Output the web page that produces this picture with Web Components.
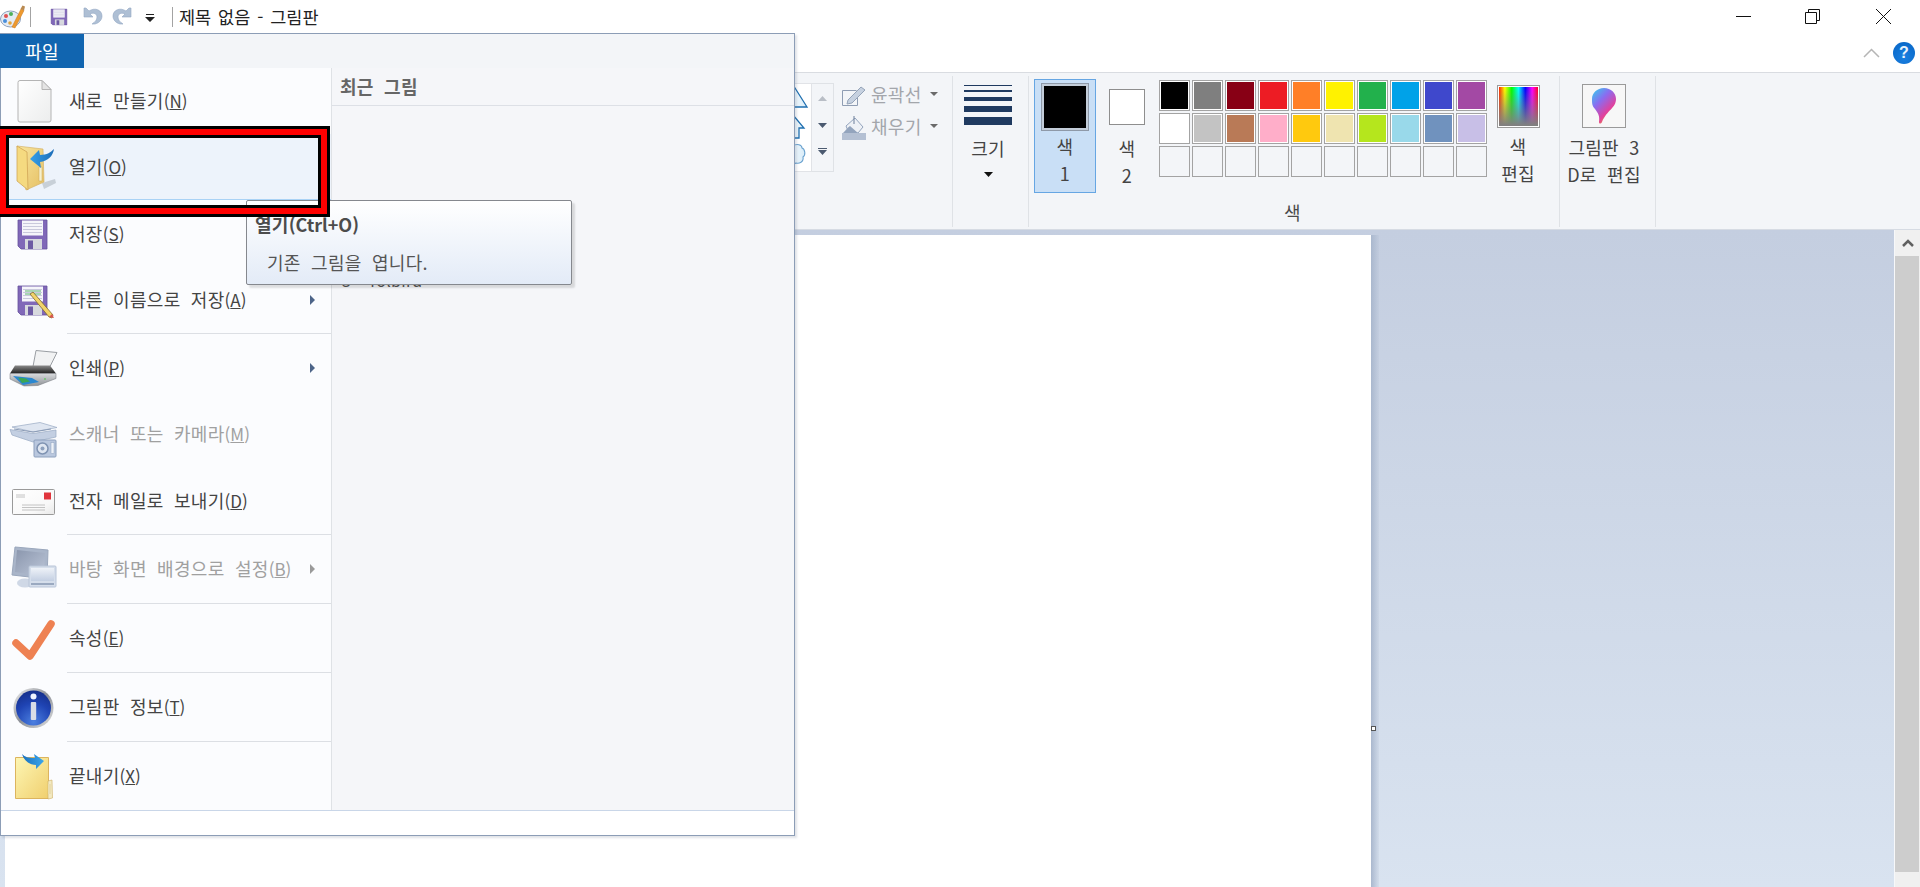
<!DOCTYPE html>
<html lang="ko">
<head>
<meta charset="utf-8">
<title>제목 없음 - 그림판</title>
<style>
  html, body { margin: 0; height: 100%; overflow: hidden; background: #fff; }
  body { font: 18px "Noto Sans CJK KR", "Noto Sans", sans-serif; color: #444; }
</style>
</head>
<body>
<paint-app></paint-app>

<script>
const floppy = `
  <path d="M0 0h29v29H3l-3-3z" transform="translate(14 16)" fill="#8068b8" stroke="#65509c" stroke-width=".8"/>
  <rect x="18" y="16.500" width="21" height="15" fill="#f5f5fa"/>
  <path d="M19 19.500h19M19 22.500h19M19 25.500h19M19 28.500h19" stroke="#c9c9dc"/>
  <rect x="21" y="35" width="17" height="10" fill="#d7d9de"/>
  <rect x="24" y="36.500" width="5" height="8.500" fill="#6d5aa4"/>`

const icons = {
  new: `
    <defs><linearGradient id="g" x1="0" y1="0" x2="1" y2="1"><stop offset="0" stop-color="#fff"/><stop offset="1" stop-color="#eceded"/></linearGradient></defs>
    <path d="M16 9.500h22l9 9V49a2 2 0 0 1-2 2H16a2 2 0 0 1-2-2V11.500a2 2 0 0 1 2-2z" fill="url(#g)" stroke="#b4b4b4"/>
    <path d="M38 9.500v9h9z" fill="#e4e4e4" stroke="#b4b4b4"/>`,
  open: `
    <defs>
      <linearGradient id="g" x1="0" y1="0" x2="1" y2="1"><stop offset="0" stop-color="#f8e6a0"/><stop offset="1" stop-color="#e6c063"/></linearGradient>
      <linearGradient id="b" x1="0" y1="0" x2="1" y2="0"><stop offset="0" stop-color="#35a0ea"/><stop offset="1" stop-color="#1c6db8"/></linearGradient>
    </defs>
    <path d="M38 46l13-4 1 4-12 6z" fill="#aab2bc" opacity=".55"/>
    <path d="M13 9l26 3 1 33-18 8z" fill="url(#g)" stroke="#d6b36a" stroke-width=".7"/>
    <path d="M13 9l10 6 1 38-11-9z" fill="#f5da80" stroke="#d0a657" stroke-width=".8"/>
    <path d="M35 30h3v14h-3z" fill="#f6f0cc" stroke="#c9a75a" stroke-width=".5"/>
    <path d="M50 12c-1 7-6 12-14 13l1 6-11-9 9-9 1 5c7 0 11-3 14-6z" fill="url(#b)"/>`,
  save: floppy,
  saveas: `${floppy}
    <path d="M21 21h16M21 24h16" stroke="#5bb56c"/>
    <path d="M26 24l3-2 20 23-1 3-3-1z" fill="#f2d36a" stroke="#7d6a2d" stroke-width=".8"/>
    <path d="M45 47l3-3 2 4z" fill="#d9534f"/>`,
  print: `
    <defs><linearGradient id="d" x1="0" y1="0" x2="0" y2="1"><stop offset="0" stop-color="#8b8b8b"/><stop offset="1" stop-color="#1f1f1f"/></linearGradient>
    <linearGradient id="s" x1="0" y1="0" x2="0" y2="1"><stop offset="0" stop-color="#d9dbde"/><stop offset="1" stop-color="#8e9296"/></linearGradient></defs>
    <path d="M32 12.500l21 2-7 14H29z" fill="#f1f2f3" stroke="#9a9ea3"/>
    <path d="M11 27.500h35l6 8H6z" fill="url(#d)"/>
    <path d="M6 35.500h46v5l-18 7-14 .5-14-7z" fill="url(#s)" stroke="#70757a" stroke-width=".5"/>
    <path d="M9 38l19 2 7 4-16 3z" fill="#2a87d0"/>
    <path d="M14 39.500l8 1 4 3-8 1.500z" fill="#3aa655"/>
    <circle cx="41" cy="41" r="1" fill="#6fc46f"/>`,
  scan: `
    <path d="M8 23l28-4.500 17 5L29 28z" fill="#dfe6f1" stroke="#98a9c3" stroke-width=".7"/>
    <path d="M6 25.500l23 4 23-3.500v7l-23 5-21-7z" fill="#c3cfe2" stroke="#98a9c3" stroke-width=".7"/>
    <path d="M10 25l19 3 18-3" fill="none" stroke="#8a9bb6"/>
    <rect x="30" y="36" width="22" height="17" rx="1" fill="#b9c7de" stroke="#8da0bd"/>
    <circle cx="38.500" cy="44.500" r="5.500" fill="#dfe6f1" stroke="#7f93b2" stroke-width="1.500"/>
    <circle cx="38.500" cy="44.500" r="2" fill="#8da0bd"/>
    <rect x="47" y="38.500" width="3" height="11" fill="#eef2f8" stroke="#8da0bd" stroke-width=".5"/>`,
  mail: `
    <defs><linearGradient id="g" x1="0" y1="0" x2="1" y2="1"><stop offset="0" stop-color="#fff"/><stop offset=".7" stop-color="#f8f8f8"/><stop offset="1" stop-color="#e8e8e8"/></linearGradient></defs>
    <rect x="8.500" y="18.500" width="42" height="25" rx="1" fill="url(#g)" stroke="#9a9a9a"/>
    <rect x="40" y="21.500" width="7" height="7" fill="#e0343c"/>
    <path d="M12 24h9M12 26h9M18 34h23M18 36.500h23M18 39h23" stroke="#b5b5b5" stroke-width=".8"/>`,
  wall: `
    <defs><linearGradient id="g" x1="0" y1="0" x2="1" y2="1"><stop offset="0" stop-color="#8a96ad"/><stop offset="1" stop-color="#bcc6d8"/></linearGradient>
    <linearGradient id="f" x1="0" y1="0" x2="0" y2="1"><stop offset="0" stop-color="#eef2f8"/><stop offset="1" stop-color="#c3cfe2"/></linearGradient></defs>
    <path d="M11 8l33 3-1 29-35-4z" fill="#a9b5c9" stroke="#9aa7bc"/>
    <path d="M13 11l28 3-1 23-29-4z" fill="url(#g)"/>
    <ellipse cx="21" cy="44" rx="8" ry="4.500" fill="#cfd8e6"/>
    <rect x="25" y="27" width="27" height="21" rx="1" fill="#d5deeb" stroke="#b9c5d8"/>
    <rect x="27" y="29" width="23" height="13" fill="url(#f)"/>
    <rect x="27" y="44" width="23" height="2" fill="#9aa9c0"/>`,
  check: `
    <path d="M12 35l14 13 21-32" fill="none" stroke="#ee8152" stroke-width="7.500" stroke-linecap="round" stroke-linejoin="round"/>`,
  info: `
    <defs>
      <radialGradient id="b" cx=".5" cy=".9" r=".9"><stop offset="0" stop-color="#4b7fe0"/><stop offset=".6" stop-color="#1f44b4"/><stop offset="1" stop-color="#16308c"/></radialGradient>
      <linearGradient id="r" x1="0" y1="0" x2="1" y2="1"><stop offset="0" stop-color="#f3f3f3"/><stop offset=".5" stop-color="#8b8f96"/><stop offset="1" stop-color="#e5e5e5"/></linearGradient>
    </defs>
    <circle cx="29.500" cy="31" r="20" fill="url(#r)"/>
    <circle cx="29.500" cy="31" r="17.500" fill="url(#b)"/>
    <circle cx="29.500" cy="19.500" r="3" fill="#eef3ff"/>
    <rect x="26.800" y="25" width="5.400" height="18" rx="1" fill="#d9dde6"/>`,
  exit: `
    <defs>
      <linearGradient id="g" x1="0" y1="0" x2="1" y2="1"><stop offset="0" stop-color="#fdf6b4"/><stop offset="1" stop-color="#f0cf6e"/></linearGradient>
      <linearGradient id="b" x1="0" y1="0" x2="1" y2="0"><stop offset="0" stop-color="#1a70bd"/><stop offset="1" stop-color="#3ba6ec"/></linearGradient>
    </defs>
    <path d="M11.500 11.500h33v41h-33z" fill="url(#g)" stroke="#dcb45e"/>
    <path d="M44 35l4-1 .5 18-4.500 1z" fill="#f2e9c2" stroke="#cfae62" stroke-width=".6"/>
    <path d="M44 38l3 0v10h-3z" fill="#e9ddb0"/>
    <path d="M18 8c3 3 6 4 13 4l-1-4 10 7-8 8v-4c-6 0-12-4-14-11z" fill="url(#b)"/>`
}

class PaintElement extends HTMLElement {
  constructor() {
    super()
    this.attachShadow({mode: 'open'})
    this.shadowRoot.innerHTML = this.template
  }
}

customElements.define('paint-app', class extends PaintElement {
  get template() {
    return `
    <style>
      :host {
        display: flex;
        flex-direction: column;
        position: relative;
        width: 1920px;
        height: 887px;
        overflow: hidden;
        font: 18px "Noto Sans CJK KR", "Noto Sans", sans-serif;
        letter-spacing: .3px;
        word-spacing: 5px;
        color: #444;
      }
    </style>
    <paint-titlebar></paint-titlebar>
    <paint-tabstrip></paint-tabstrip>
    <paint-ribbon></paint-ribbon>
    <paint-workspace></paint-workspace>
    <paint-file-menu></paint-file-menu>
    <paint-tooltip></paint-tooltip>
    <paint-mark></paint-mark>
    `
  }
})

customElements.define('paint-titlebar', class extends PaintElement {
  get template() {
    return `
    <style>
      :host {
        display: flex;
        align-items: center;
        height: 33px;
        flex: none;
        background: #fff;
        color: #222;
      }
      svg { display: block; flex: none; }
      .bar { width: 1px; height: 20px; background: #a3a3a3; flex: none; }
      .title { margin-left: 6px; white-space: nowrap; font-size: 17.500px; letter-spacing: 0; word-spacing: 2px; }
      .flex { flex: 1; }
      .ctl { width: 15px; height: 15px; flex: none; }
    </style>
    <svg width="26" height="26" viewBox="0 0 26 26" style="margin-left:0">
      <ellipse cx="10.500" cy="15" rx="10" ry="8" fill="#e4ebf4" stroke="#8fa2bd"/>
      <circle cx="6" cy="12" r="2" fill="#e05252"/><circle cx="11" cy="10" r="2" fill="#4eb05a"/>
      <circle cx="5" cy="17" r="2" fill="#4a8fdb"/><circle cx="10" cy="19" r="1.800" fill="#e0a33c"/>
      <path d="M12 23L21 5l3 1.500L15 24z" fill="#ee9a2f" stroke="#c8741a" stroke-width=".5"/>
      <path d="M20.500 5l2-3.500 2.500 1-1 4z" fill="#b98a52"/>
    </svg>
    <div class="bar" style="margin-left:4px"></div>
    <svg width="18" height="18" viewBox="12 14 33 33" style="margin-left:19px">${floppy}</svg>
    <svg width="22" height="20" viewBox="0 0 22 20" style="margin-left:13px">
      <path d="M3 1v9h9L9 7c4-2 7 0 7 3 0 3-2 5-5 7h3c4-1 7-4 7-8 0-6-7-9-13-5L5 1z" fill="#aebfd4" stroke="#93a8c4" stroke-width=".6"/>
    </svg>
    <svg width="22" height="20" viewBox="0 0 22 20" style="margin-left:9px;transform:scaleX(-1)">
      <path d="M3 1v9h9L9 7c4-2 7 0 7 3 0 3-2 5-5 7h3c4-1 7-4 7-8 0-6-7-9-13-5L5 1z" fill="#aebfd4" stroke="#93a8c4" stroke-width=".6"/>
    </svg>
    <svg width="10" height="9" viewBox="0 0 10 9" style="margin-left:11px;margin-top:4px">
      <path d="M1 0h8v1H1zM0 3h10L5 8z" fill="#222"/>
    </svg>
    <div class="bar" style="margin-left:17px"></div>
    <span class="title">제목 없음 - 그림판</span>
    <span class="flex"></span>
    <svg class="ctl" viewBox="0 0 15 15"><path d="M0 7.500h15" stroke="#111"/></svg>
    <svg class="ctl" viewBox="0 0 15 15" style="margin-left:54px"><path d="M.5 3.500h11v11H.5zM3.500 3.500v-3h11v11h-3" fill="none" stroke="#111"/></svg>
    <svg class="ctl" viewBox="0 0 15 15" style="margin-left:56px;margin-right:29px"><path d="M0 0l15 15M15 0L0 15" stroke="#111"/></svg>
    `
  }
})

customElements.define('paint-tabstrip', class extends PaintElement {
  get template() {
    return `
    <style>
      :host {
        display: flex;
        align-items: center;
        justify-content: flex-end;
        height: 39px;
        flex: none;
        background: #fff;
      }
      .help {
        width: 22px;
        height: 22px;
        margin: 1px 5px 0 13px;
        border-radius: 50%;
        background: radial-gradient(circle at 50% 70%, #1a7fe0, #0664c4);
        color: #e8f2fc;
        font: bold 16px/22px "Liberation Sans", sans-serif;
        text-align: center;
      }
      svg { display: block; }
    </style>
    <svg width="17" height="10" viewBox="0 0 17 10" style="margin-top:1px"><path d="M1 9l7.500-7.500L16 9" fill="none" stroke="#b5b5b5" stroke-width="1.500"/></svg>
    <div class="help">?</div>
    `
  }
})

customElements.define('paint-ribbon', class extends PaintElement {
  get template() {
    const first = ['#000', '#7f7f7f', '#880015', '#ed1c24', '#ff7f27', '#fff200', '#22b14c', '#00a2e8', '#3f48cc', '#a349a4']
    const second = ['#fff', '#c3c3c3', '#b97a57', '#ffaec9', '#ffc90e', '#efe4b0', '#b5e61d', '#99d9ea', '#7092be', '#c8bfe7']
    const third = Array(10).fill('')
    const cells = [...first, ...second, ...third].map(color => `<i style="background:${color || 'transparent'}" class="${color ? '' : 'empty'}"></i>`).join('')
    return `
    <style>
      :host {
        display: flex;
        height: 158px;
        flex: none;
        box-sizing: border-box;
        border-top: 1px solid #d9dce1;
        border-bottom: 1px solid #d6dbe3;
        background: #f3f5f8;
      }
      svg { display: block; flex: none; }
      .group {
        position: relative;
        display: flex;
        box-sizing: border-box;
        flex: none;
        height: 100%;
      }
      .group::after {
        content: '';
        position: absolute;
        right: 0;
        top: 3px;
        bottom: 2px;
        width: 1px;
        background: #dfe2e6;
      }
      .shapes { width: 953px; padding-left: 752px; padding-top: 10px; }
      .gallery {
        width: 60px;
        height: 89px;
        box-sizing: border-box;
        background: #fff;
        border: 1px solid #e1e3e7;
      }
      .scroller {
        width: 22px;
        height: 89px;
        box-sizing: border-box;
        border: 1px solid #dfe2e6;
        border-left: 0;
        display: flex;
        flex-direction: column;
        align-items: center;
      }
      .scroller svg:nth-child(1) { margin-top: 12px; }
      .scroller svg:nth-child(2) { margin-top: 22px; }
      .scroller svg:nth-child(3) { margin-top: 20px; }
      .tools { margin: -5px 0 0 8px; color: #a3a6ab; }
      .tool { display: flex; align-items: center; height: 32px; }
      .tool span { margin-left: 5px; width: 54px; white-space: nowrap; }
      .tool svg + span + svg { margin-left: 5px; }
      .stack { display: flex; flex-direction: column; align-items: center; text-align: center; line-height: 27px; }
      .size { width: 76px; padding: 12px 6px 0 0; }
      .size .lines { width: 48px; height: 40px; }
      .size .lines b { display: block; background: #1f3a60; }
      .size .label { margin-top: 10px; }
      .colors { width: 531px; padding: 6px 0 0 5px; }
      .main { width: 62px; height: 114px; box-sizing: border-box; }
      .main.on { background: #c9dff6; border: 1px solid #66a6e3; }
      .main .frame { box-sizing: border-box; width: 48px; height: 48px; border: 1px solid #8e99a8; background: #c3cdd9; padding: 2px; margin-top: 3px; }
      .main .frame b { display: block; width: 100%; height: 100%; background: #000; }
      .main .label { margin-top: 2px; }
      .main.off .frame { width: 36px; height: 36px; margin-top: 10px; margin-bottom: 9px; border-color: #8e8e8e; background: #fff; padding: 0; }
      .main.off .label { margin-top: 1px; }
      .grid {
        display: grid;
        grid-template-columns: repeat(10, 31px);
        grid-auto-rows: 31px;
        gap: 2px;
        margin: 1px 0 0 1px;
      }
      .grid i {
        display: block;
        box-sizing: border-box;
        border: 1px solid #a3a3a3;
        box-shadow: inset 0 0 0 1px #fff;
      }
      .grid i.empty { box-shadow: none; }
      .caption { position: absolute; left: 0; right: 0; top: 126px; text-align: center; line-height: 27px; padding-right: 4px; color: #4a4a4a; }
      .edit { width: 62px; }
      .rainbow {
        box-sizing: border-box;
        width: 43px;
        height: 43px;
        margin: 6px 0 5px;
        border: 1px solid #9a9a9a;
        box-shadow: inset 0 0 0 1px #fff;
        background: linear-gradient(to bottom, rgba(128,128,128,0) 5%, #808080 95%), linear-gradient(90deg, #f00, #ff0, #0f0, #0ff, #00f, #f0f, #f00);
      }
      .three { width: 96px; padding: 11px 8px 0 0; white-space: nowrap; }
      .tile {
        box-sizing: border-box;
        width: 44px;
        height: 44px;
        margin-bottom: 6px;
        border: 1px solid #9a9a9a;
        background: #f7f7f7;
        display: flex;
        align-items: center;
        justify-content: center;
      }
    </style>
    <div class="group shapes">
      <div class="gallery">
        <svg width="58" height="87" viewBox="0 0 58 87">
          <defs><linearGradient id="sf" x1="0" y1="0" x2="1" y2="0"><stop offset="0" stop-color="#fff"/><stop offset="1" stop-color="#d9ecf8"/></linearGradient></defs>
          <path d="M42 4l12 19H32z" fill="url(#sf)" stroke="#1f6fb0" stroke-width="1.300"/>
          <path d="M40 31l11 13h-5v10H36V31z" fill="url(#sf)" stroke="#1f6fb0" stroke-width="1.300"/>
          <path d="M40 62c4-3 9-1 9 2 3 1 4 7 1 9 1 5-4 7-7 6-3 2-8 1-10-1-3-6 1-16 7-16z" fill="url(#sf)" stroke="#6aa2cf" stroke-width="1.100"/>
        </svg>
      </div>
      <div class="scroller">
        <svg width="9" height="5" viewBox="0 0 9 5"><path d="M4.500 0L9 5H0z" fill="#b9bec6"/></svg>
        <svg width="9" height="5" viewBox="0 0 9 5"><path d="M0 0h9L4.500 5z" fill="#4b5a70"/></svg>
        <svg width="9" height="7" viewBox="0 0 9 7"><path d="M0 0h9v1H0zM0 2h9L4.500 7z" fill="#4b5a70"/></svg>
      </div>
      <div class="tools">
        <div class="tool">
          <svg width="24" height="20" viewBox="0 0 24 20" style="margin-top:3px">
            <path d="M.5 4.500h14M.5 4.500v15h15v-9" fill="none" stroke="#8f9db3"/>
            <path d="M6 14L19 1l4 3-13 13-5 1z" fill="#c6d1e0" stroke="#94a3b8"/>
          </svg>
          <span>윤곽선</span>
          <svg width="8" height="4" viewBox="0 0 8 4"><path d="M0 0h8L4 4z" fill="#6a6a6a"/></svg>
        </div>
        <div class="tool">
          <svg width="24" height="24" viewBox="0 0 24 24" style="margin-top:3px">
            <path d="M4 10l9-8 8 9-5 6H7z" fill="#eef1f6" stroke="#93a4bd" stroke-width="1"/>
            <path d="M1 17c3-3 4-5 7-7l8 7z" fill="#93a4bd"/>
            <rect x="0" y="17" width="24" height="7" fill="#b4c0d3"/>
            <path d="M12 0v8" stroke="#6d7f9a"/>
          </svg>
          <span>채우기</span>
          <svg width="8" height="4" viewBox="0 0 8 4"><path d="M0 0h8L4 4z" fill="#6a6a6a"/></svg>
        </div>
      </div>
    </div>
    <div class="group size stack">
      <div class="lines">
        <b style="height:1px"></b><b style="height:2px;margin-top:4px"></b><b style="height:4px;margin-top:5px"></b><b style="height:6px;margin-top:5px"></b><b style="height:8px;margin-top:5px"></b>
      </div>
      <div class="label">크기</div>
      <svg width="9" height="5" viewBox="0 0 9 5" style="margin-top:10px"><path d="M0 0h9L4.500 5z" fill="#111"/></svg>
    </div>
    <div class="group colors">
      <div class="main on stack">
        <div class="frame"><b></b></div>
        <div class="label">색<br>1</div>
      </div>
      <div class="main off stack">
        <div class="frame"></div>
        <div class="label">색<br>2</div>
      </div>
      <div class="grid">${cells}</div>
      <div class="edit stack">
        <div class="rainbow"></div>
        <div>색<br>편집</div>
      </div>
      <div class="caption">색</div>
    </div>
    <div class="group three stack">
      <div class="tile">
        <svg width="26" height="38" viewBox="0 0 26 38">
          <defs>
            <linearGradient id="dr" x1="0" y1="0" x2=".7" y2="1"><stop offset="0" stop-color="#2fd4ee"/><stop offset=".4" stop-color="#8a6cf0"/><stop offset=".75" stop-color="#e2409c"/><stop offset="1" stop-color="#f2a321"/></linearGradient>
          </defs>
          <path d="M13 1c7 0 12 5 12 11 0 9-9 11-14 23-1 2-3 2-3 0 1-6-1-9-4-13C1 19 1 16 1 12 1 6 6 1 13 1z" fill="url(#dr)"/>
        </svg>
      </div>
      <div>그림판 3<br>D로 편집</div>
    </div>
    `
  }
})

customElements.define('paint-workspace', class extends PaintElement {
  get template() {
    return `
    <style>
      :host {
        display: flex;
        flex: 1;
        min-height: 0;
        background: linear-gradient(#c4cee0, #d9e3f0);
      }
      .area { flex: 1; display: flex; padding: 5px 0 0 5px; }
      .canvas { position: relative; width: 1366px; background: #fff; }
      .canvas::after {
        content: '';
        position: absolute;
        left: 100%;
        top: 0;
        bottom: 0;
        width: 8px;
        background: linear-gradient(90deg, #aab8ce, rgba(170,184,206,.15));
      }
      .handle {
        position: absolute;
        z-index: 1;
        right: -5px;
        top: 491px;
        box-sizing: border-box;
        width: 5px;
        height: 5px;
        background: #fff;
        border: 1px solid #555;
      }
      .bar {
        width: 25px;
        flex: none;
        border-left: 1px solid #f7f8fa;
        background: #f0f0f0;
        display: flex;
        flex-direction: column;
      }
      .up { height: 26px; display: flex; align-items: center; justify-content: center; }
      .thumb { height: 616px; background: #cdcdcd; margin-right: 1px; }
      svg { display: block; }
    </style>
    <div class="area"><div class="canvas"><div class="handle"></div></div></div>
    <div class="bar">
      <div class="up"><svg width="12" height="8" viewBox="0 0 12 8"><path d="M1 7l5-5 5 5" fill="none" stroke="#606060" stroke-width="2.500"/></svg></div>
      <div class="thumb"></div>
    </div>
    `
  }
})

customElements.define('paint-menu-item', class extends PaintElement {
  connectedCallback() {
    this.style.height = this.getAttribute('h') + 'px'
    const icon = this.getAttribute('icon')
    this.shadowRoot.querySelector('svg.icon').innerHTML = icons[icon]
  }
  get template() {
    return `
    <style>
      :host {
        display: flex;
        flex-direction: column;
        color: #444;
      }
      :host([disabled]) { color: #a0a0a0; }
      :host([active]) { background: #edf3fb; box-shadow: inset 0 -1px 0 #a9d2f5; }
      .row { flex: 1; display: flex; align-items: center; min-height: 0; padding-right: 16px; }
      .icon { flex: none; display: block; margin: 0 5px 0 3px; }
      .text { flex: 1; white-space: nowrap; margin-top: -2px; }
      .arrow { display: none; flex: none; width: 0; height: 0; border-left: 5px solid #4d6488; border-top: 5px solid transparent; border-bottom: 5px solid transparent; }
      :host([arrow]) .arrow { display: block; }
      :host([disabled]) .arrow { border-left-color: #9a9a9a; }
      .line { display: none; height: 1px; margin-left: 66px; background: #dcdfe4; flex: none; }
      :host([sep]) .line { display: block; }
      ::slotted(small) { font-size: 17px; letter-spacing: 0; }
    </style>
    <div class="row">
      <svg class="icon" width="60" height="60" viewBox="0 0 60 60"></svg>
      <span class="text"><slot></slot></span>
      <span class="arrow"></span>
    </div>
    <div class="line"></div>
    `
  }
})

customElements.define('paint-file-menu', class extends PaintElement {
  get template() {
    return `
    <style>
      :host {
        position: absolute;
        left: 0;
        top: 33px;
        width: 795px;
        height: 803px;
        box-sizing: border-box;
        display: flex;
        flex-direction: column;
        border: 1px solid #8c9db6;
        background: #fff;
        box-shadow: 2px 2px 2px rgba(90,100,120,.18);
      }
      .strip { height: 34px; flex: none; background: #f3f5f8; display: flex; margin-left: -1px; }
      .tab {
        width: 84px;
        background: #1165b0;
        color: #fff;
        text-align: center;
        line-height: 34px;
      }
      .body { height: 742px; flex: none; display: flex; }
      .left { width: 330px; flex: none; background: #fbfcfe; border-right: 1px solid #dfe2e6; }
      .right { flex: 1; background: #f5f6f9; color: #666; }
      .head { height: 38px; box-sizing: border-box; border-bottom: 1px solid #dde0e6; padding-left: 8px; font-weight: bold; line-height: 36px; }
      .recent { margin: 162px 0 0 10px; color: #555; font-size: 16px; line-height: 24px; white-space: nowrap; display: flex; gap: 17px; }
      .foot { flex: 1; border-top: 1px solid #c9d6e8; background: #fff; }
    </style>
    <div class="strip"><div class="tab">파일</div></div>
    <div class="body">
      <div class="left">
        <paint-menu-item h="66" icon="new">새로 만들기<small>(<u>N</u>)</small></paint-menu-item>
        <paint-menu-item h="66" icon="open" active>열기<small>(<u>O</u>)</small></paint-menu-item>
        <paint-menu-item h="67" icon="save">저장<small>(<u>S</u>)</small></paint-menu-item>
        <paint-menu-item h="67" icon="saveas" arrow sep>다른 이름으로 저장<small>(<u>A</u>)</small></paint-menu-item>
        <paint-menu-item h="67" icon="print" arrow>인쇄<small>(<u>P</u>)</small></paint-menu-item>
        <paint-menu-item h="66" icon="scan" disabled>스캐너 또는 카메라<small>(<u>M</u>)</small></paint-menu-item>
        <paint-menu-item h="68" icon="mail" sep>전자 메일로 보내기<small>(<u>D</u>)</small></paint-menu-item>
        <paint-menu-item h="69" icon="wall" arrow disabled sep>바탕 화면 배경으로 설정<small>(<u>B</u>)</small></paint-menu-item>
        <paint-menu-item h="69" icon="check" sep>속성<small>(<u>E</u>)</small></paint-menu-item>
        <paint-menu-item h="69" icon="info" sep>그림판 정보<small>(<u>T</u>)</small></paint-menu-item>
        <paint-menu-item h="68" icon="exit">끝내기<small>(<u>X</u>)</small></paint-menu-item>
      </div>
      <div class="right">
        <div class="head">최근 그림</div>
        <div class="recent"><span>3</span><span>Yolbird</span></div>
      </div>
    </div>
    <div class="foot"></div>
    `
  }
})

customElements.define('paint-tooltip', class extends PaintElement {
  get template() {
    return `
    <style>
      :host {
        position: absolute;
        left: 246px;
        top: 200px;
        width: 326px;
        height: 85px;
        box-sizing: border-box;
        border: 1px solid #85888e;
        border-radius: 2px;
        background: linear-gradient(#fff, #e3ebf7);
        box-shadow: 3px 3px 2px rgba(0,0,0,.12);
        color: #4c4c4c;
        padding: 11px 0 0 8px;
        line-height: 24px;
      }
      b { display: block; }
      b span { letter-spacing: 0; }
      p { margin: 14px 0 0 12px; color: #555; }
    </style>
    <b>열기<span>(Ctrl+O)</span></b>
    <p>기존 그림을 엽니다.</p>
    `
  }
})

customElements.define('paint-mark', class extends PaintElement {
  get template() {
    return `
    <style>
      :host {
        position: absolute;
        left: -3px;
        top: 126px;
        width: 333px;
        height: 91px;
        box-sizing: border-box;
        border: 3px solid #000;
      }
      div { box-sizing: border-box; height: 100%; }
      .red { border: 6px solid #f00; }
      .inner { border: 3px solid #000; }
    </style>
    <div class="red"><div class="inner"></div></div>
    `
  }
})
</script>
</body>
</html>
